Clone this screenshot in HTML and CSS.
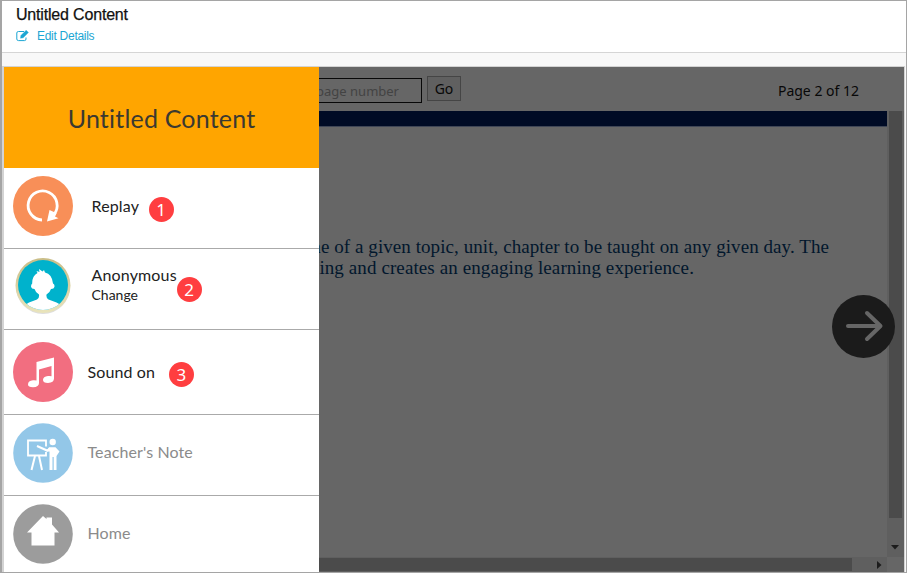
FILE: index.html
```html
<!DOCTYPE html>
<html lang="en">
<head>
<meta charset="utf-8">
<title>Untitled Content</title>
<link rel="stylesheet" href="styles.css">
</head>
<body>
<div class="frame">
  <header class="header">
    <h1>Untitled Content</h1>
    <a class="edit"><svg width="13" height="12" viewBox="0 0 13 12" fill="none" stroke="currentColor"><path d="M8 1.500H2.500Q.8 1.500.8 3v6q0 1.600 1.700 1.600h6Q10 10.600 10 9V7.500"/><path d="M4.500 8.200l.4-2.700L10.200.3l2.200 2.200-5.200 5.300z" fill="currentColor" stroke-width=".4"/></svg><span>Edit Details</span></a>
  </header>
  <main class="player">
    <nav class="menu">
      <div class="menu-title"><span>Untitled Content</span></div>
      <div class="row replay">
        <svg class="icon" viewBox="0 0 60 60"><circle cx="30" cy="30" r="30" fill="#f88f58"/><path d="M29 44A14.500 14.500 0 1 1 41 38.500" fill="none" stroke="#fff" stroke-width="2.800"/><path d="M36.500 34l-2.500 11.500 11.500-3.200-3.500-1.800 1.700-3.300z" fill="#fff"/></svg>
        <span class="label">Replay</span><b class="badge">1</b>
      </div>
      <div class="row user">
        <svg class="icon" viewBox="0 0 60 60"><defs><clipPath id="face"><circle cx="30" cy="29" r="25"/></clipPath><linearGradient id="ring" x2="0" y2="1"><stop stop-color="#c9bd87"/><stop offset="1" stop-color="#e9e4bc"/></linearGradient></defs><ellipse cx="30" cy="31" rx="27" ry="27" fill="#ddd"/><circle cx="30" cy="29.500" r="27.500" fill="url(#ring)"/><circle cx="30" cy="29" r="25" fill="#00b2cc"/><path clip-path="url(#face)" d="M12 49l4-2.500 8-3q2.500-1 2-5-3.500-2-4.500-5.500-3 0-3.500-2.500 0-2 1.200-3Q19 20 24.500 17l-1-2 3 1-.5-3 3.500 2.500L31 14l1 2.500q7 1.500 8 11 1.800 1 1.500 3-.5 2.500-3.500 2.500-1 3.500-4.500 5.500-.5 4 2 5l8 3L48 49v7H12z" fill="#fff"/></svg>
        <span class="label">Anonymous<small>Change</small></span><b class="badge">2</b>
      </div>
      <div class="row sound">
        <svg class="icon" viewBox="0 0 60 60"><circle cx="30" cy="30" r="30" fill="#f26e80"/><path d="M23.500 20L41 15.500v21q0 4-6 4.500-5 0-5-3 0-3.500 5-4 2-.3 3.500.3V24l-12.500 3.400v13.500q0 4-6 4.300-5 0-5-2.700 0-3.800 5-4.300 2-.2 3.500.3z" fill="#fff"/></svg>
        <span class="label">Sound on</span><b class="badge">3</b>
      </div>
      <div class="row teacher muted">
        <svg class="icon" viewBox="0 0 60 60"><circle cx="30" cy="30" r="29.800" fill="#93c7e8"/><g fill="none" stroke="#fff" stroke-width="1.800"><path d="M33 23.500V17.500H15v15h18V29"/><path d="M22 33l-3.500 14M26 33l3 14" stroke-width="2"/><path d="M24 23l10 4.500 3-2" stroke-width="2"/></g><circle cx="39.700" cy="19" r="3.200" fill="#fff"/><path d="M36 24.300h6.500l4 4.200-3 4.500v14h-2.800V34h-1.200v13h-3V28.500l-3 .3 1-2z" fill="#fff"/></svg>
        <span class="label">Teacher's Note</span>
      </div>
      <div class="row home muted">
        <svg class="icon" viewBox="0 0 60 60"><circle cx="30" cy="30" r="29.800" fill="#9c9c9c"/><path d="M30 12l3.500 3v-1.500h5.500v7l7 8H41.500V41.500h-23V28.500H14z" fill="#fff"/></svg>
        <span class="label">Home</span>
      </div>
    </nav>
    <section class="stage">
      <div class="toolbar">
        <div class="field">page number</div><div class="go">Go</div>
        <span class="page">Page 2 of 12</span>
      </div>
      <div class="viewport">
        <article class="document">
          <p class="line one">ne of a given topic, unit, chapter to be taught on any given day. The</p>
          <p class="line two">ing and creates an engaging learning experience.</p>
        </article>
        <div class="vbar"><i></i><svg width="8" height="5" viewBox="0 0 8 5"><path d="M0 0h8L4 4.500z" fill="#1c1c1c"/></svg></div>
        <div class="hbar"><i></i><svg width="5" height="8" viewBox="0 0 5 8"><path d="M0 0v8l4.500-4z" fill="#1c1c1c"/></svg></div>
        <div class="corner"></div>
      </div>
      <svg class="next" viewBox="0 0 63 63"><circle cx="31.500" cy="31.500" r="31.500" fill="#1b1b1b"/><path d="M16 31h32M35 18l13.500 13L35 44" fill="none" stroke="#666" stroke-width="4" stroke-linecap="round" stroke-linejoin="round"/></svg>
    </section>
  </main>
</div>
</body>
</html>
```
FILE: styles.css
```css
* { box-sizing: border-box; }
body { margin: 0; }
.frame {
  width: 907px; height: 573px; overflow: hidden;
  border: 1px solid #a5a5a5; border-left-width: 2px;
  background: #f8f8f8;
}
.header {
  height: 52px; padding: 5px 0 0 14px;
  background: #fff; border-bottom: 1px solid #d5d5d5;
  font-family: "Liberation Sans", sans-serif;
}
h1 {
  margin: 0; font-size: 16px; line-height: 18px; font-weight: 400;
  color: #111; -webkit-text-stroke: .25px #111; letter-spacing: -.18px;
}
.edit {
  display: flex; align-items: center; gap: 8px; height: 15px; margin-top: 4px;
  font-size: 12px; letter-spacing: -.28px; color: #1ba6d3;
}
.player {
  display: flex; width: 903px; height: 506px; margin-top: 13px;
  border: 1px solid #d3d3d3; border-width: 1px 1px 0 2px;
}
.menu {
  position: relative; z-index: 1;
  width: 315px; flex: none; background: #fff; color: #222;
  font-family: Lato, sans-serif;
}
.menu-title {
  display: flex; align-items: center; justify-content: center;
  height: 101px; padding-top: 1px; background: #ffa500; color: #3b3931;
  font-size: 25px; letter-spacing: .2px;
}
.row { display: flex; height: 81px; padding: 8px 0 0 9px; border-bottom: 1px solid #aaa; }
.icon { width: 60px; height: 60px; flex: none; }
.label { margin-left: 14.5px; line-height: 20px; padding-top: 20px; font-size: 16px; letter-spacing: .1px; white-space: nowrap; }
.badge {
  display: grid; place-items: center; width: 25px; height: 25px;
  border-radius: 50%; background: #ff3e40; color: #fff;
  font: 400 17px/25px "Noto Sans", sans-serif;
}
.replay .label, .user .label { margin-left: 18.5px; letter-spacing: .15px; }
.replay .badge { margin: 21px 0 0 9.500px; }
.user .icon { margin-top: -1px; }
.user .label { padding-top: 8px; width: 85px; }
.user small { display: block; font-size: 14px; letter-spacing: 0; }
.user .badge { margin: 20px 0 0 0; }
.sound { height: 85px; padding-top: 12px; }
.sound .badge { margin: 20px 0 0 14px; }
.muted { color: #8b8b8b; }
.muted .label { padding-top: 19px; }
.home { border-bottom: 0; }
.stage { position: relative; flex: 1; min-width: 0; background: #666; }
.toolbar {
  display: flex; height: 44px; padding-top: 9px;
  font: 14px "Noto Sans", sans-serif; color: #080808;
}
.field {
  display: flex; justify-content: flex-end; width: 103px; height: 25px;
  padding-right: 22px; border: 1px solid #080808; border-left: 0; margin-top: 2px;
  font-size: 13px; line-height: 24px; color: #434343; white-space: nowrap;
}
.go { width: 34px; height: 25px; margin-left: 5px; border: 1px solid #454545; background: #606060; text-align: center; line-height: 24px; }
.page { margin: 5px 45px 0 auto; }
.viewport { display: grid; grid-template: 446px 15px / 568px 17px; height: 461px; }
.document { border-top: 15px solid #000b25; color: #02172d; padding-top: 109px; box-shadow: inset 0 1px #3f4656; }
.line {
  display: flex; justify-content: flex-end; height: 21px; margin: 0;
  font: 19px/24px "Liberation Serif", serif; white-space: nowrap;
}
.one { width: 510px; letter-spacing: .07px; }
.two { width: 375px; letter-spacing: .1px; }
.vbar { background: #5f5f5f; padding-left: 2px; }
.vbar i { display: block; width: 13px; height: 407px; background: #4b4b4b; }
.vbar svg { display: block; margin: 27px 0 0 2px; }
.hbar { display: flex; align-items: center; background: #5f5f5f; }
.hbar i { width: 533px; height: 13px; background: #4b4b4b; }
.hbar svg { margin-left: 25px; }
.corner { background: #666; }
.next { position: absolute; left: 513px; top: 228px; width: 63px; height: 63px; }
```
